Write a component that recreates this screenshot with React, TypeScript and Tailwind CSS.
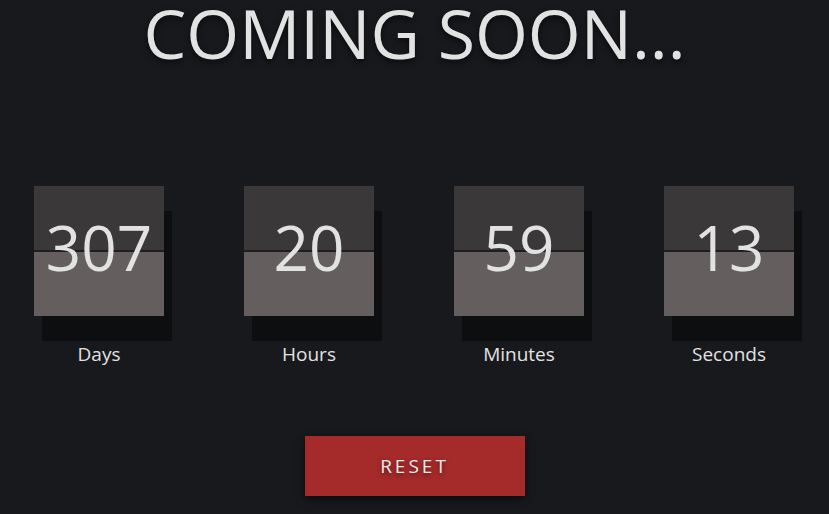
const units = [
  { value: "307", label: "Days" },
  { value: "20", label: "Hours" },
  { value: "59", label: "Minutes" },
  { value: "13", label: "Seconds" },
];

const FlipCard = ({ value, label }: { value: string; label: string }) => (
  <div className="flex flex-col items-center w-[130px]">
    <div className="relative w-[130px] h-[130px]">
      {/* offset shadow block */}
      <div className="absolute left-[8px] top-[25px] w-[130px] h-[130px] bg-[#0d0e10]" />
      <div className="relative w-full h-full flex flex-col">
        <div className="h-[64px] bg-[#3a3839]" />
        <div className="h-[2px] bg-[#1f1d1e]" />
        <div className="flex-1 bg-[#645e5e]" />
        <div className="absolute inset-0 flex items-center justify-center text-[62px] leading-none text-[#e2e2e2] pb-[8px]">
          {value}
        </div>
      </div>
    </div>
    <div className="mt-[29px] text-[19px] leading-none text-[#e2e2e2]">{label}</div>
  </div>
);

export default function App() {
  return (
    <div
      className="w-[829px] h-[514px] bg-[#18191d] flex flex-col items-center overflow-hidden"
      style={{ fontFamily: '"Open Sans", "Noto Sans", sans-serif' }}
    >
      <h1 className="text-[68px] leading-[66px] text-[#e2e2e2] [text-shadow:0_3px_6px_rgba(0,0,0,0.6)]">
        COMING SOON...
      </h1>
      <div className="mt-[120px] self-start pl-[34px] flex gap-[80px]">
        {units.map((u) => (
          <FlipCard key={u.label} value={u.value} label={u.label} />
        ))}
      </div>
      <button className="mt-[72px] w-[220px] h-[60px] bg-[#a52a2a] text-[#eaeaea] text-[19px] tracking-[3px] shadow-[0_3px_8px_rgba(0,0,0,0.6)] [text-shadow:0_2px_4px_rgba(0,0,0,0.5)]">
        RESET
      </button>
    </div>
  );
}
